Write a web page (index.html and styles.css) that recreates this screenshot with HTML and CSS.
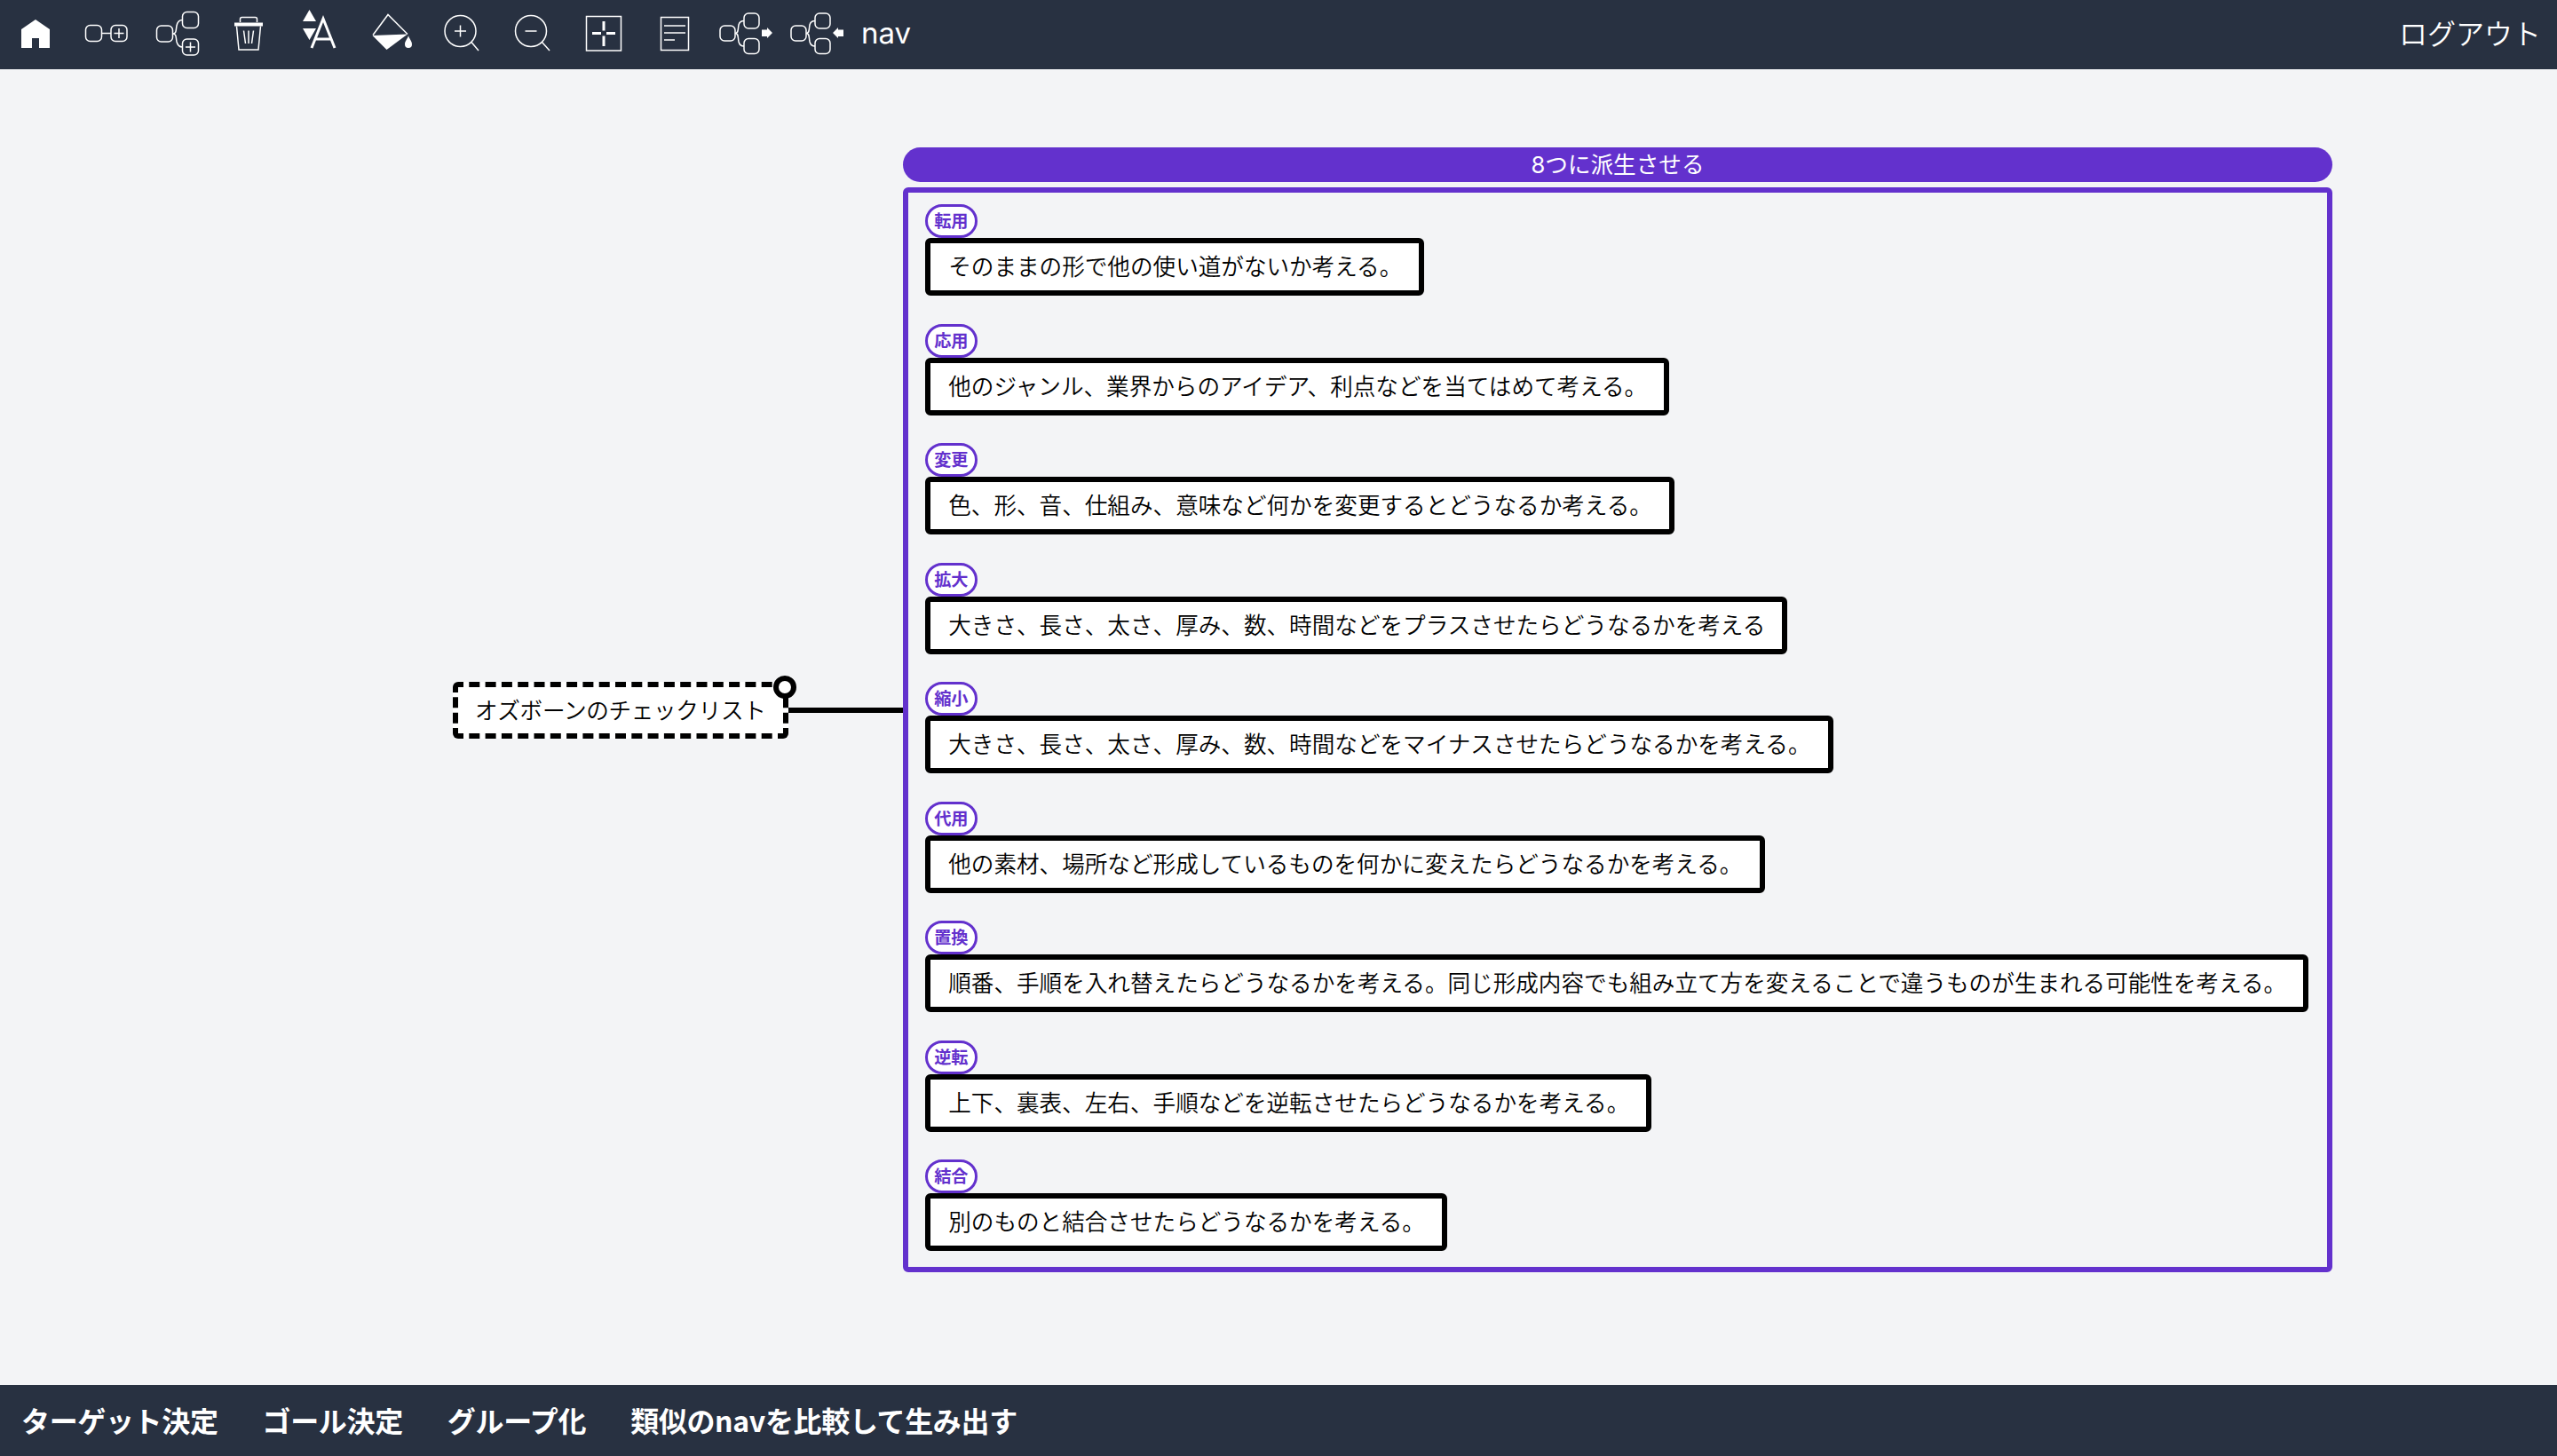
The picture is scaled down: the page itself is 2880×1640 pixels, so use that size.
FILE: index.html
```html
<!DOCTYPE html>
<html lang="ja">
<head>
<meta charset="UTF-8"/>
<title>nav</title>
<link rel="stylesheet" href="styles.css">
</head>
<body>

<header class="topbar">
  <div class="tools">
    <svg class="tool" viewBox="0 0 80 78"><path class="solid" d="M40 22 L56 33 V54 H44 V43 H36 V54 H24 V33 Z"/></svg>
    <svg class="tool" viewBox="0 0 80 78"><rect x="16.500" y="28.500" width="18" height="18" rx="5"/><path d="M34.500 37.500 H45"/><rect x="45" y="28.500" width="18" height="18" rx="5"/><path d="M54 32 V43 M48.500 37.500 H59.500"/></svg>
    <svg class="tool" viewBox="0 0 80 78"><rect x="16.500" y="29" width="18" height="18" rx="5"/><rect x="45.500" y="13.500" width="18" height="18" rx="5"/><rect x="45.500" y="44" width="18" height="18" rx="5"/><path d="M34.500 38 C39 38 38 34 39 29 C40 24 42 22.500 45.500 22.500 M34.500 38 C39 38 38 42 39 47 C40 51 42 53 45.500 53 M54.500 47.500 V58.500 M49 53 H60"/></svg>
    <svg class="tool" viewBox="0 0 80 78"><path class="solid" d="M24 25.500 H56 V29.500 H24 Z"/><path d="M30.500 25 V21.500 Q30.500 19.500 32.500 19.500 H47.500 Q49.500 19.500 49.500 21.500 V25 M26.500 29.500 L29 56 H51 L53.500 29.500 M34.500 34.500 L36.500 49 M40 34.500 V49 M45.500 34.500 L43.500 49"/></svg>
    <svg class="tool" viewBox="0 0 80 78"><path class="solid" d="M28.500 11 L36 24 H21 Z M21 32 H36 L28.500 45 Z"/><path class="thick" d="M31 54 L44 21 L57 54 M35 44 H53"/></svg>
    <svg class="tool" viewBox="0 0 80 78"><path d="M20 39.500 L37 16.500 L59 38.500"/><path class="solid" d="M19.500 40 L59 38.500 L35.500 56 Z"/><path class="solid" d="M60 40 C61 44 64 46 64 50 A4 4 0 0 1 56 50 C56 46 59 44 60 40 Z"/></svg>
    <svg class="tool" viewBox="0 0 80 78"><circle cx="38.500" cy="35" r="17.500"/><path d="M51 47.500 L59 57 M38.500 28.500 V41.500 M32 35 H45"/></svg>
    <svg class="tool" viewBox="0 0 80 78"><circle cx="38" cy="35" r="17.500"/><path d="M50.500 47.500 L59 57 M31.500 35 H44.500"/></svg>
    <svg class="tool" viewBox="0 0 80 78"><rect x="20.500" y="18.500" width="39" height="38.500"/><path class="thick" d="M27 37.500 H37 M43 37.500 H53 M40 24 V34.500 M40 40.500 V52"/></svg>
    <svg class="tool" viewBox="0 0 80 78"><rect x="24.500" y="19.500" width="31" height="37"/><path d="M28 29 H52 M28 37 H52 M28 45 H40"/></svg>
    <svg class="tool" viewBox="0 0 80 78"><rect x="11" y="29" width="17" height="17" rx="5"/><rect x="38" y="15" width="17" height="17" rx="5"/><rect x="38" y="43.500" width="17" height="17" rx="5"/><path d="M28 37.500 C32 37.500 31 33 32 28 C33 24 35 23.500 38 23.500 M28 37.500 C32 37.500 31 42 32 47 C33 51 35 52 38 52"/><path class="solid" d="M58 33.500 H64 V31 L70 37 L64 43 V41 H58 Z"/></svg>
    <svg class="tool" viewBox="0 0 80 78"><rect x="11" y="29" width="17" height="17" rx="5"/><rect x="38" y="15" width="17" height="17" rx="5"/><rect x="38" y="43.500" width="17" height="17" rx="5"/><path d="M28 37.500 C32 37.500 31 33 32 28 C33 24 35 23.500 38 23.500 M28 37.500 C32 37.500 31 42 32 47 C33 51 35 52 38 52"/><path class="solid" d="M70 33.500 H64 V31 L58 37 L64 43 V41 H70 Z"/></svg>
    <span class="title">nav</span>
  </div>
  <a class="logout">ログアウト</a>
</header>

<main class="canvas">
  <div class="root">
    オズボーンのチェックリスト
    <span class="handle"></span>
  </div>
  <div class="link"></div>
  <section class="group">
    <h2 class="group-title">8つに派生させる</h2>
    <div class="group-box">
      <div class="item"><span class="tag">転用</span><p class="node">そのままの形で他の使い道がないか考える。</p></div>
      <div class="item"><span class="tag">応用</span><p class="node">他のジャンル、業界からのアイデア、利点などを当てはめて考える。</p></div>
      <div class="item"><span class="tag">変更</span><p class="node">色、形、音、仕組み、意味など何かを変更するとどうなるか考える。</p></div>
      <div class="item"><span class="tag">拡大</span><p class="node">大きさ、長さ、太さ、厚み、数、時間などをプラスさせたらどうなるかを考える</p></div>
      <div class="item"><span class="tag">縮小</span><p class="node">大きさ、長さ、太さ、厚み、数、時間などをマイナスさせたらどうなるかを考える。</p></div>
      <div class="item"><span class="tag">代用</span><p class="node">他の素材、場所など形成しているものを何かに変えたらどうなるかを考える。</p></div>
      <div class="item"><span class="tag">置換</span><p class="node">順番、手順を入れ替えたらどうなるかを考える。同じ形成内容でも組み立て方を変えることで違うものが生まれる可能性を考える。</p></div>
      <div class="item"><span class="tag">逆転</span><p class="node">上下、裏表、左右、手順などを逆転させたらどうなるかを考える。</p></div>
      <div class="item"><span class="tag">結合</span><p class="node">別のものと結合させたらどうなるかを考える。</p></div>
    </div>
  </section>
</main>

<footer class="bottombar">
  <a>ターゲット決定</a>
  <a>ゴール決定</a>
  <a>グループ化</a>
  <a>類似のnavを比較して生み出す</a>
</footer>

</body>
</html>
```

FILE: styles.css
```css
html, body{
  margin:0;
  padding:0;
  height:100%;
}
body{
  display:flex;
  flex-direction:column;
  background-color:#f3f4f6;
  color:#000;
  font-family:Inter, "Noto Sans CJK JP", sans-serif;
  font-size:25.6px;
}
p, h2{
  margin:0;
  font-size:inherit;
  font-weight:normal;
}

/* top bar */
.topbar{
  height:78px;
  flex:none;
  display:flex;
  justify-content:space-between;
  align-items:center;
  padding-right:18px;
  background-color:#283141;
  color:#fff;
  font-size:32px;
}
.tools{
  display:flex;
  align-items:center;
}
.tool{
  width:80px;
  height:78px;
  fill:none;
  stroke:#fff;
  stroke-width:1.5;
}
.tool .solid{
  fill:#fff;
  stroke:none;
}
.tool .thick{
  stroke-width:3;
}
.title{
  margin:-4px 0 0 10px;
  font-size:33px;
}
.logout{
  margin-top:-6px;
  font-weight:350;
  font-family:"Noto Sans CJK JP", sans-serif;
}

/* diagram */
.canvas{
  flex:1;
  display:flex;
  align-items:center;
  align-self:flex-start;
  padding:88px 0 127px 510px;
}
.root{
  position:relative;
  box-sizing:border-box;
  width:378px;
  height:64px;
  line-height:50px;
  padding:0 19px;
  border:6px dashed #000;
  border-radius:6px;
  background-color:#fff;
  white-space:nowrap;
  font-weight:350;
  letter-spacing:-0.300px;
  font-family:"Noto Sans CJK JP", sans-serif;
}
.handle{
  position:absolute;
  top:-13px;
  right:-15px;
  box-sizing:border-box;
  width:26px;
  height:26px;
  border:6px solid #000;
  border-radius:50%;
  background-color:#fff;
}
.link{
  width:129px;
  height:6px;
  background-color:#000;
}
.group{
  width:1610px;
}
.group-title{
  height:39px;
  line-height:39px;
  margin-bottom:6px;
  border-radius:20px;
  background-color:#6331cd;
  color:#fff;
  text-align:center;
}
.group-box{
  box-sizing:border-box;
  height:1222px;
  padding:13px 19.200px 18px;
  border:6px solid #6331cd;
  border-radius:6px;
  display:flex;
  flex-direction:column;
  justify-content:space-between;
  align-items:flex-start;
}
.item{
  display:flex;
  flex-direction:column;
  align-items:flex-start;
}
.tag{
  box-sizing:border-box;
  height:38px;
  line-height:31px;
  padding:0 7px;
  border:3.500px solid #6331cd;
  border-radius:19px;
  background-color:#fff;
  color:#6331cd;
  font-size:19.200px;
  font-weight:700;
  font-family:"Noto Sans CJK JP", sans-serif;
}
.node{
  box-sizing:border-box;
  height:65px;
  line-height:50px;
  padding:0 19.200px 0 20px;
  border:6px solid #000;
  border-radius:6px;
  background-color:#fff;
  white-space:nowrap;
  font-weight:350;
  font-family:"Noto Sans CJK JP", sans-serif;
}

/* bottom bar */
.bottombar{
  height:78px;
  flex:none;
  display:flex;
  align-items:center;
  gap:50px;
  padding:0 0 2px 24px;
  background-color:#283141;
  color:#fff;
  font-size:32px;
  font-weight:700;
  letter-spacing:-0.350px;
  font-family:"Noto Sans CJK JP", sans-serif;
}
```
